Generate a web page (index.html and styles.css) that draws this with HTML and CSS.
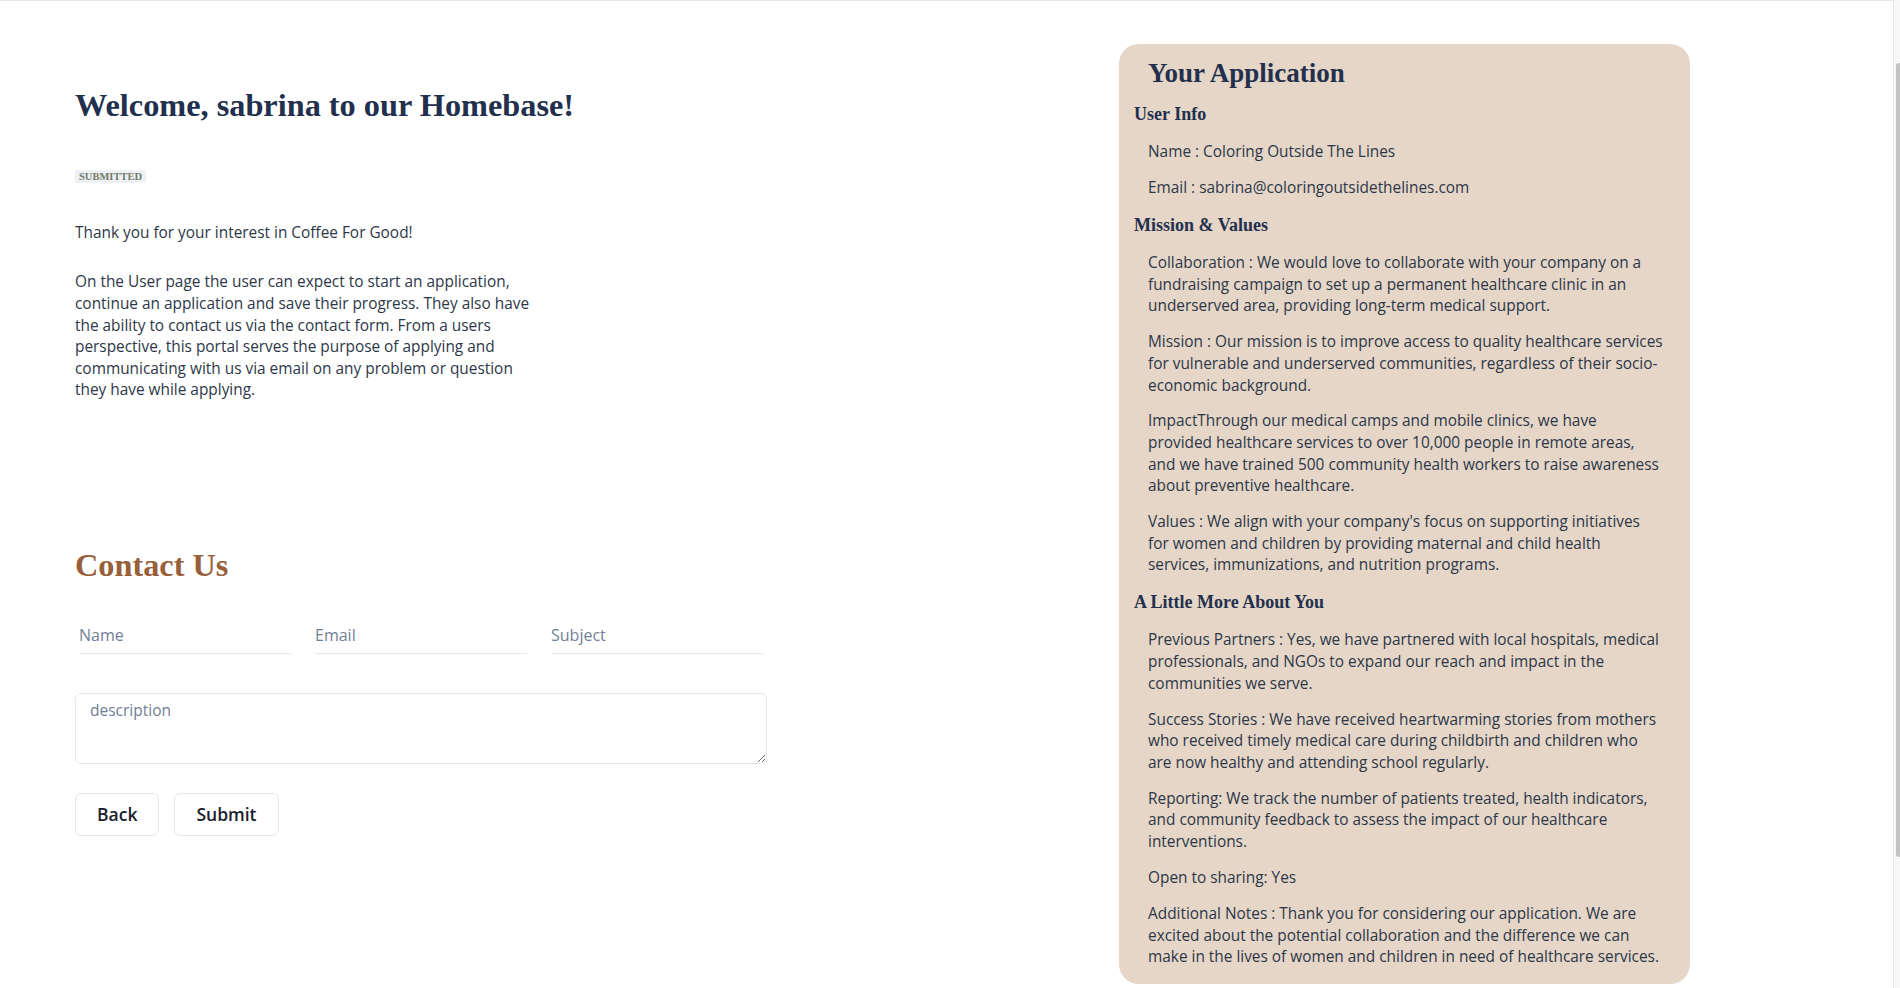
FILE: index.html
```html
<!DOCTYPE html>
<html lang="en">
<head>
<meta charset="utf-8">
<title>Homebase</title>
<link rel="stylesheet" href="styles.css">
</head>
<body>
<div class="page">
  <main class="main">
    <div class="left">
      <section class="intro">
        <h1 class="welcome">Welcome, sabrina to our Homebase!</h1>
        <span class="badge">Submitted</span>
        <p class="lead">Thank you for your interest in Coffee For Good!</p>
        <p class="desc">On the User page the user can expect to start an application, continue an application and save their progress. They also have the ability to contact us via the contact form. From a users perspective, this portal serves the purpose of applying and communicating with us via email on any problem or question they have while applying.</p>
      </section>
      <section class="contact">
        <h2 class="contact-title">Contact Us</h2>
        <form class="contact-form">
          <div class="field-row">
            <input class="field" type="text" placeholder="Name">
            <input class="field" type="email" placeholder="Email">
            <input class="field" type="text" placeholder="Subject">
          </div>
          <textarea class="desc-box" placeholder="description"></textarea>
          <div class="actions">
            <button type="button" class="btn">Back</button>
            <button type="submit" class="btn">Submit</button>
          </div>
        </form>
      </section>
    </div>
    <aside class="card">
      <h2 class="card-title">Your Application</h2>
      <h3 class="card-sub">User Info</h3>
      <p class="item">Name : Coloring Outside The Lines</p>
      <p class="item">Email : sabrina@coloringoutsidethelines.com</p>
      <h3 class="card-sub">Mission &amp; Values</h3>
      <p class="item">Collaboration : We would love to collaborate with your company on a fundraising campaign to set up a permanent healthcare clinic in an underserved area, providing long-term medical support.</p>
      <p class="item">Mission : Our mission is to improve access to quality healthcare services for vulnerable and underserved communities, regardless of their socio-economic background.</p>
      <p class="item">ImpactThrough our medical camps and mobile clinics, we have provided healthcare services to over 10,000 people in remote areas, and we have trained 500 community health workers to raise awareness about preventive healthcare.</p>
      <p class="item">Values : We align with your company's focus on supporting initiatives for women and children by providing maternal and child health services, immunizations, and nutrition programs.</p>
      <h3 class="card-sub">A Little More About You</h3>
      <p class="item">Previous Partners : Yes, we have partnered with local hospitals, medical professionals, and NGOs to expand our reach and impact in the communities we serve.</p>
      <p class="item">Success Stories : We have received heartwarming stories from mothers who received timely medical care during childbirth and children who are now healthy and attending school regularly.</p>
      <p class="item">Reporting: We track the number of patients treated, health indicators, and community feedback to assess the impact of our healthcare interventions.</p>
      <p class="item">Open to sharing: Yes</p>
      <p class="item">Additional Notes : Thank you for considering our application. We are excited about the potential collaboration and the difference we can make in the lives of women and children in need of healthcare services.</p>
    </aside>
  </main>
  <div class="scrollbar"><div class="thumb"></div></div>
</div>
</body>
</html>
```
FILE: styles.css
```css
* { box-sizing: border-box; }
html, body { margin: 0; padding: 0; height: 100%; overflow: hidden; background: #ffffff; }
body { font-family: "Open Sans", "Noto Sans", sans-serif; color: #2d3748; }

.page { display: flex; height: 988px; }

.main {
  flex: 1;
  display: flex;
  justify-content: space-between;
  align-items: flex-start;
  border-top: 1px solid #e2e8f0;
  padding: 0 203px 0 75px;
}

.scrollbar {
  width: 7px;
  border-left: 1px solid #e4e4e4;
  background: #f8f8f8;
  padding-top: 63px;
}
.thumb {
  height: 794px;
  margin-left: 2px;
  background: #c2c2c2;
  border-radius: 3px 0 0 3px;
}

/* Left column */
.left { width: 692px; padding-top: 85px; }

.welcome {
  margin: 0;
  font-family: "Liberation Serif", "Times New Roman", serif;
  font-weight: 700;
  font-size: 32.3px;
  line-height: 38.4px;
  color: #22304d;
}

.badge {
  display: block;
  width: fit-content;
  margin-top: 45.6px;
  padding: 0 4px;
  height: 13px;
  line-height: 13px;
  font-family: "Liberation Serif", "Times New Roman", serif;
  font-weight: 700;
  font-size: 10.5px;
  text-transform: uppercase;
  color: #737966;
  background: #edf1f6;
  border-radius: 2px;
}

.lead, .desc {
  font-size: 15.4px;
  line-height: 21.6px;
  margin: 0;
  color: #2d3748;
}
.lead { margin-top: 38.8px; }
.desc { margin-top: 28px; max-width: 462px; }

.contact-title {
  margin: 145px 0 0;
  font-family: "Liberation Serif", "Times New Roman", serif;
  font-weight: 700;
  font-size: 32.3px;
  line-height: 38.4px;
  color: #98603a;
}

.contact-form { margin-top: 29.6px; }

.field-row {
  display: grid;
  grid-template-columns: repeat(3, 1fr);
  gap: 24px;
  padding: 0 4px;
}
.field {
  height: 40px;
  padding: 4px 0 0;
  border: 0;
  border-bottom: 1px solid #e2e8f0;
  font-family: inherit;
  font-size: 16px;
  color: #2d3748;
  background: transparent;
  outline: none;
  min-width: 0;
}
.field::placeholder, .desc-box::placeholder { color: #718096; opacity: 1; }

.desc-box {
  display: block;
  width: 100%;
  height: 71px;
  margin-top: 39px;
  padding: 5px 14px;
  border: 1px solid #e2e8f0;
  border-radius: 6px;
  font-family: inherit;
  font-size: 15.5px;
  line-height: 22px;
  color: #2d3748;
  resize: vertical;
  outline: none;
}

.actions { display: flex; gap: 15px; margin-top: 29px; }
.btn {
  height: 43px;
  padding: 0 21px;
  border: 1px solid #e2e8f0;
  border-radius: 6px;
  background: #ffffff;
  font-family: inherit;
  font-weight: 600;
  font-size: 17.5px;
  color: #1a202c;
  cursor: pointer;
}

/* Right card */
.card {
  width: 571px;
  margin-top: 43px;
  padding: 14px 15px 16px;
  background: #e5d6c7;
  border-radius: 20px;
}
.card-title {
  margin: 0 0 15px;
  padding-left: 14px;
  font-family: "Liberation Serif", "Times New Roman", serif;
  font-weight: 700;
  font-size: 27px;
  line-height: 31px;
  color: #22304d;
}
.card-sub {
  margin: 16.2px 0;
  font-family: "Liberation Serif", "Times New Roman", serif;
  font-weight: 700;
  font-size: 18px;
  line-height: 21px;
  color: #22304d;
}
.card-title + .card-sub { margin-top: 0; }
.item {
  margin: 0 0 14.4px;
  padding: 0 10.5px 0 14px;
  font-size: 15.4px;
  line-height: 21.6px;
  color: #2d3748;
}
.item:last-child { margin-bottom: 0; }
.card-sub + .item { margin-top: 0; }
```
